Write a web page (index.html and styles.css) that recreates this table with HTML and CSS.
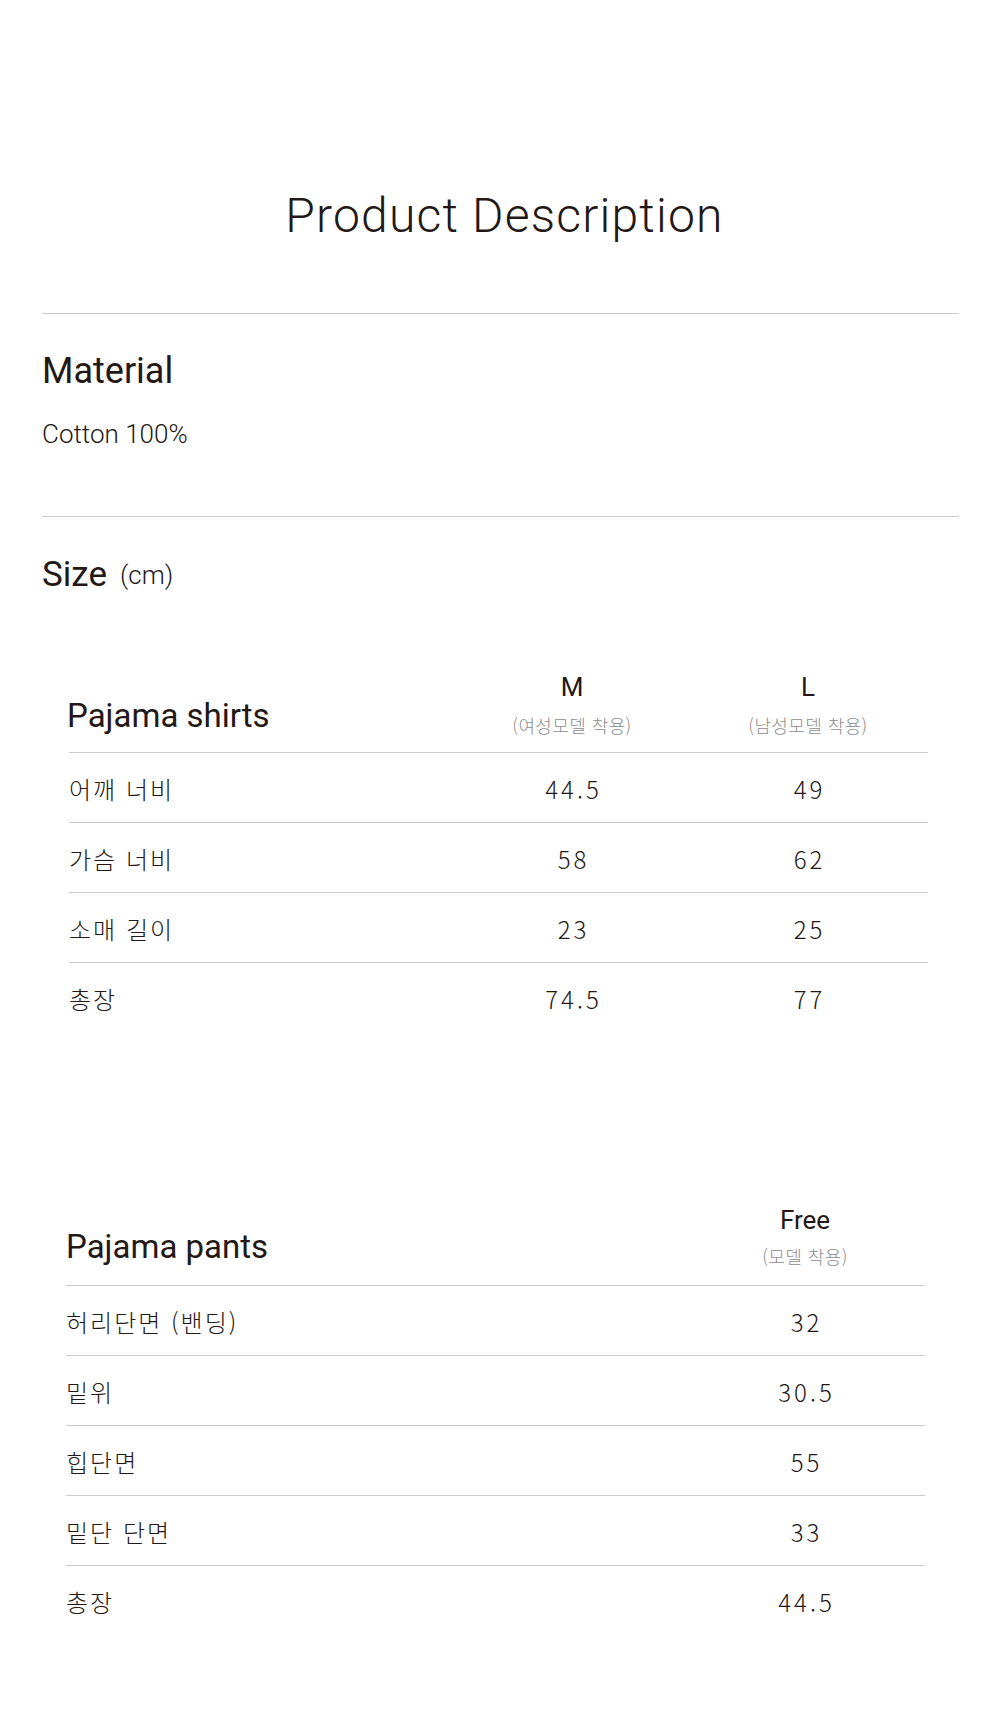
FILE: index.html
```html
<!DOCTYPE html>
<html lang="ko">
<head>
<meta charset="utf-8">
<title>Product Description</title>
<link rel="stylesheet" href="styles.css">
</head>
<body>
<main class="page">
  <h1 class="title">Product Description</h1>

  <section class="section material">
    <h2 class="heading">Material</h2>
    <p class="body-text">Cotton 100%</p>
  </section>

  <section class="section size">
    <h2 class="heading">Size <span class="unit">(cm)</span></h2>

    <div class="size-table shirts">
      <div class="row head">
        <div class="cell label-head">Pajama shirts</div>
        <div class="cell col-head"><span class="size-name">M</span><span class="size-note">(여성모델 착용)</span></div>
        <div class="cell col-head"><span class="size-name">L</span><span class="size-note">(남성모델 착용)</span></div>
      </div>
      <div class="row"><div class="cell label">어깨 너비</div><div class="cell num">44.5</div><div class="cell num">49</div></div>
      <div class="row"><div class="cell label">가슴 너비</div><div class="cell num">58</div><div class="cell num">62</div></div>
      <div class="row"><div class="cell label">소매 길이</div><div class="cell num">23</div><div class="cell num">25</div></div>
      <div class="row last"><div class="cell label">총장</div><div class="cell num">74.5</div><div class="cell num">77</div></div>
    </div>

    <div class="size-table pants">
      <div class="row head">
        <div class="cell label-head">Pajama pants</div>
        <div class="cell col-head"><span class="size-name">Free</span><span class="size-note">(모델 착용)</span></div>
      </div>
      <div class="row"><div class="cell label">허리단면 (밴딩)</div><div class="cell num">32</div></div>
      <div class="row"><div class="cell label">밑위</div><div class="cell num">30.5</div></div>
      <div class="row"><div class="cell label">힙단면</div><div class="cell num">55</div></div>
      <div class="row"><div class="cell label">밑단 단면</div><div class="cell num">33</div></div>
      <div class="row last"><div class="cell label">총장</div><div class="cell num">44.5</div></div>
    </div>
  </section>
</main>
</body>
</html>
```

FILE: styles.css
```css
html, body {
  margin: 0;
  padding: 0;
  background: #ffffff;
}

body {
  color: #231815;
  font-family: Roboto, "Liberation Sans", "Noto Sans CJK KR", sans-serif;
}

.page {
  width: 1000px;
  box-sizing: border-box;
  padding: 188px 41px 98px 42px;
}

.title {
  margin: 0;
  padding-left: 8px;
  font-family: Roboto, "Liberation Sans", sans-serif;
  font-weight: 300;
  font-size: 48px;
  line-height: 56px;
  text-align: center;
  letter-spacing: 1.2px;
}

.section {
  border-top: 1px solid #cccccc;
}

.material {
  margin-top: 69px;
  padding: 36px 0 66px;
}

.heading {
  margin: 0;
  font-weight: 400;
  font-size: 36px;
  line-height: 42px;
  display: flex;
  align-items: baseline;
}

.body-text {
  margin: 26px 0 0;
  font-weight: 300;
  font-size: 26px;
  line-height: 32px;
}

.size {
  padding-top: 38px;
}

.size .heading {
  font-size: 35px;
  line-height: 40px;
}

.unit {
  font-size: 26px;
  font-weight: 300;
  margin-left: 13px;
  position: relative;
  top: -2px;
}

.size-table .row {
  display: grid;
  border-bottom: 1px solid #cccccc;
}

.size-table .row.last {
  border-bottom: 0;
}

.shirts {
  margin: 75px 31px 0 27px;
}

.shirts .row {
  grid-template-columns: 1fr 232px 240px;
}

.pants {
  margin: 173px 34px 0 24px;
}

.pants .row {
  grid-template-columns: 1fr 240px;
}

.row.head {
  align-items: end;
  padding-bottom: 16px;
}

.pants .row.head {
  padding-bottom: 18px;
}

.label-head {
  font-size: 33px;
  line-height: 40px;
  font-weight: 400;
}

.shirts .label-head {
  margin-left: -2px;
}

.col-head {
  display: flex;
  flex-direction: column;
  align-items: center;
}

.size-name {
  font-size: 26px;
  line-height: 30px;
  font-weight: 400;
}

.size-note {
  margin-top: 12px;
  font-family: "Noto Sans CJK KR", sans-serif;
  font-weight: 300;
  font-size: 18px;
  line-height: 22px;
  letter-spacing: 0.4px;
  color: #8c8c8c;
}

.pants .size-note {
  margin-top: 10px;
}

.row:not(.head) .cell {
  font-family: "Noto Sans CJK KR", sans-serif;
  font-weight: 300;
  font-size: 24px;
  line-height: 63px;
  padding-top: 4px;
  padding-bottom: 2px;
}

.row .label {
  letter-spacing: 2px;
}

.row .num {
  text-align: center;
  letter-spacing: 3px;
  text-indent: 3px;
}
```
